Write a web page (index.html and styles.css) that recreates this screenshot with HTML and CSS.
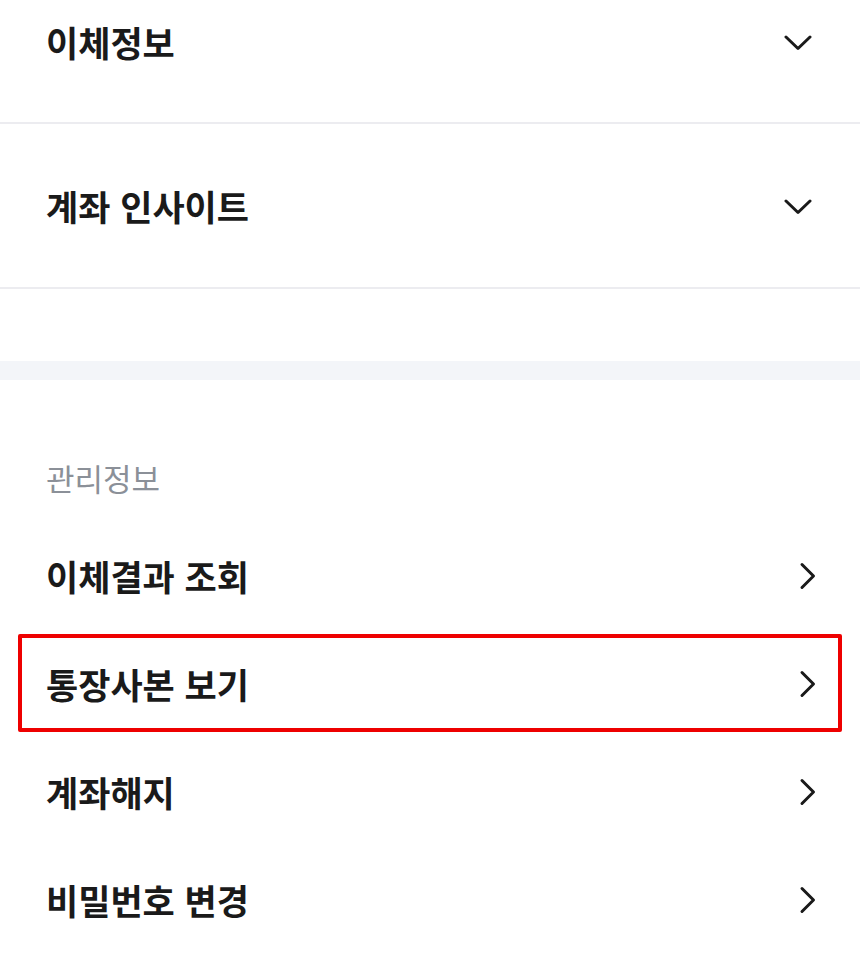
FILE: index.html
```html
<!DOCTYPE html>
<html lang="ko">
<head>
<meta charset="utf-8">
<link rel="stylesheet" href="styles.css">
</head>
<body>
<div class="page">
  <section class="accordion">
    <div class="acc-row acc-row--first">
      <span class="acc-title">이체정보</span>
      <svg class="chev-down" width="28" height="16" viewBox="0 0 28 16"><path d="M2 2 L14 13.5 L26 2" fill="none" stroke="#1a1a1a" stroke-width="3" stroke-linecap="round" stroke-linejoin="round"/></svg>
    </div>
    <div class="acc-row">
      <span class="acc-title">계좌 인사이트</span>
      <svg class="chev-down" width="28" height="16" viewBox="0 0 28 16"><path d="M2 2 L14 13.5 L26 2" fill="none" stroke="#1a1a1a" stroke-width="3" stroke-linecap="round" stroke-linejoin="round"/></svg>
    </div>
  </section>
  <div class="spacer"></div>
  <div class="band"></div>
  <section class="manage">
    <h2 class="manage-head">관리정보</h2>
    <ul class="menu">
      <li class="menu-item">
        <span class="menu-title">이체결과 조회</span>
        <svg class="chev-right" width="18" height="28" viewBox="0 0 18 28"><path d="M3 2.5 L14.5 14 L3 25.5" fill="none" stroke="#1a1a1a" stroke-width="3" stroke-linecap="round" stroke-linejoin="round"/></svg>
      </li>
      <li class="menu-item menu-item--highlight">
        <span class="menu-title">통장사본 보기</span>
        <svg class="chev-right" width="18" height="28" viewBox="0 0 18 28"><path d="M3 2.5 L14.5 14 L3 25.5" fill="none" stroke="#1a1a1a" stroke-width="3" stroke-linecap="round" stroke-linejoin="round"/></svg>
      </li>
      <li class="menu-item">
        <span class="menu-title">계좌해지</span>
        <svg class="chev-right" width="18" height="28" viewBox="0 0 18 28"><path d="M3 2.5 L14.5 14 L3 25.5" fill="none" stroke="#1a1a1a" stroke-width="3" stroke-linecap="round" stroke-linejoin="round"/></svg>
      </li>
      <li class="menu-item">
        <span class="menu-title">비밀번호 변경</span>
        <svg class="chev-right" width="18" height="28" viewBox="0 0 18 28"><path d="M3 2.5 L14.5 14 L3 25.5" fill="none" stroke="#1a1a1a" stroke-width="3" stroke-linecap="round" stroke-linejoin="round"/></svg>
      </li>
    </ul>
  </section>
</div>
</body>
</html>
```

FILE: styles.css
```css
* { box-sizing: border-box; }

html, body {
  margin: 0;
  padding: 0;
  background: #ffffff;
}

body {
  font-family: "Noto Sans CJK KR", "Noto Sans", sans-serif;
  color: #1a1a1a;
}

.page {
  width: 860px;
  overflow: hidden;
}

.accordion {
  display: flex;
  flex-direction: column;
}

.acc-row {
  height: 165px;
  display: flex;
  align-items: center;
  justify-content: space-between;
  padding: 0 48px 0 46px;
  border-bottom: 2px solid #ececf0;
}

.acc-row--first {
  height: 124px;
  padding-bottom: 38px;
}

.acc-title {
  font-size: 35px;
  font-weight: 700;
  line-height: 50px;
}

.chev-down {
  display: block;
  margin-top: 2px;
}

.spacer {
  height: 72px;
}

.band {
  height: 19px;
  background: #f3f5f9;
}

.manage {
  padding-top: 76px;
}

.manage-head {
  margin: 0;
  padding: 0 46px;
  font-size: 31px;
  font-weight: 400;
  line-height: 44px;
  color: #8b9098;
}

.menu {
  list-style: none;
  margin: 22px 0 0;
  padding: 0;
}

.menu-item {
  height: 108px;
  display: flex;
  align-items: center;
  justify-content: space-between;
  padding: 0 43px 0 46px;
  position: relative;
}

.menu-title {
  font-size: 35px;
  font-weight: 700;
  line-height: 50px;
}

.chev-right {
  display: block;
}

.menu-item--highlight::after {
  content: "";
  position: absolute;
  left: 18px;
  right: 18px;
  top: 4px;
  bottom: 6px;
  border: 4px solid #ee0000;
  border-radius: 2px;
  pointer-events: none;
}
```
